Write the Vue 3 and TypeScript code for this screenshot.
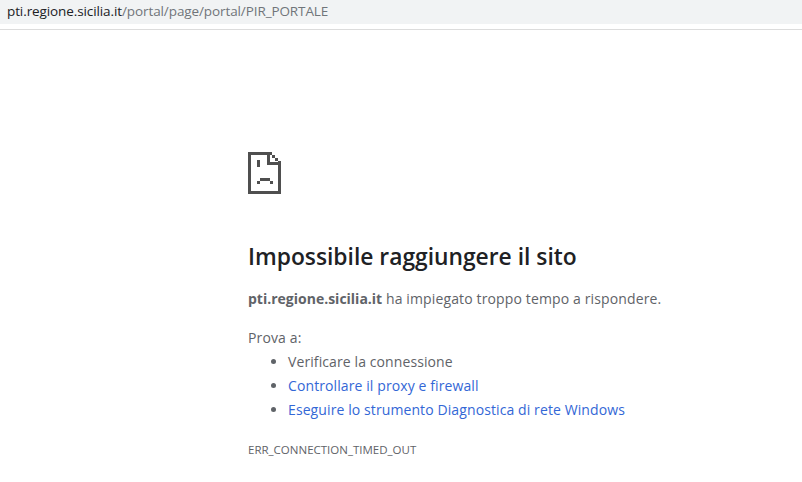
<template>
  <div class="page">
    <div class="urlbar">
      <span class="host">pti.regione.sicilia.it</span><span class="path">/portal/page/portal/PIR_PORTALE</span>
    </div>
    <main class="content">
      <svg class="icon" width="34" height="43" viewBox="0 0 34 43" shape-rendering="crispEdges" fill="#4f4f4f" aria-hidden="true">
        <path d="M0 0H24V3H3V39H30V13H33V42H0Z" />
        <path d="M19 3H22V10H33V13H19Z" />
        <path d="M24 3H27V6H30V9H33V10H30V9H27V6H24Z" />
        <path d="M9 8H12V15H9Z" />
        <path d="M12 26H22V29H25V32H22V29H12V32H9V29H12Z" />
      </svg>
      <h1>Impossibile raggiungere il sito</h1>
      <p class="summary"><strong>pti.regione.sicilia.it</strong> ha impiegato troppo tempo a rispondere.</p>
      <p class="try">Prova a:</p>
      <ul>
        <li>Verificare la connessione</li>
        <li><a href="#">Controllare il proxy e firewall</a></li>
        <li><a href="#">Eseguire lo strumento Diagnostica di rete Windows</a></li>
      </ul>
      <div class="code">ERR_CONNECTION_TIMED_OUT</div>
    </main>
  </div>
</template>

<script setup lang="ts">
</script>

<style>
html, body {
  background: #fff;
}
</style>

<style scoped>
.page {
  width: 802px;
  height: 482px;
  overflow: hidden;
  font-family: "Open Sans", "Noto Sans", sans-serif;
  color: #5f6368;
}

.urlbar {
  height: 24px;
  padding-left: 7px;
  background: #f1f3f4;
  font-size: 13.5px;
  line-height: 22px;
  letter-spacing: -0.1px;
  color: #70757a;
  box-shadow: 0 5px 0 #fff, 0 6px 0 #dcdcdc;
}

.host {
  color: #202124;
}

.content {
  padding: 128px 0 0 248px;
}

.icon {
  display: block;
}

h1 {
  margin: 47px 0 0;
  font-size: 22.8px;
  font-weight: 600;
  line-height: 30px;
  color: #202124;
}

p {
  margin: 0;
  font-size: 14px;
  line-height: 20px;
  letter-spacing: 0.13px;
}

.summary {
  margin-top: 17px;
}

.summary strong {
  font-weight: 700;
  letter-spacing: 0;
}

.try {
  margin-top: 19px;
}

ul {
  margin: 2px 0 0;
  padding-left: 40px;
  font-size: 14px;
  letter-spacing: 0.1px;
}

li {
  line-height: 24px;
}

a {
  color: #3367d6;
  text-decoration: none;
}

.code {
  margin-top: 20px;
  font-size: 11.5px;
  line-height: 16px;
}
</style>
